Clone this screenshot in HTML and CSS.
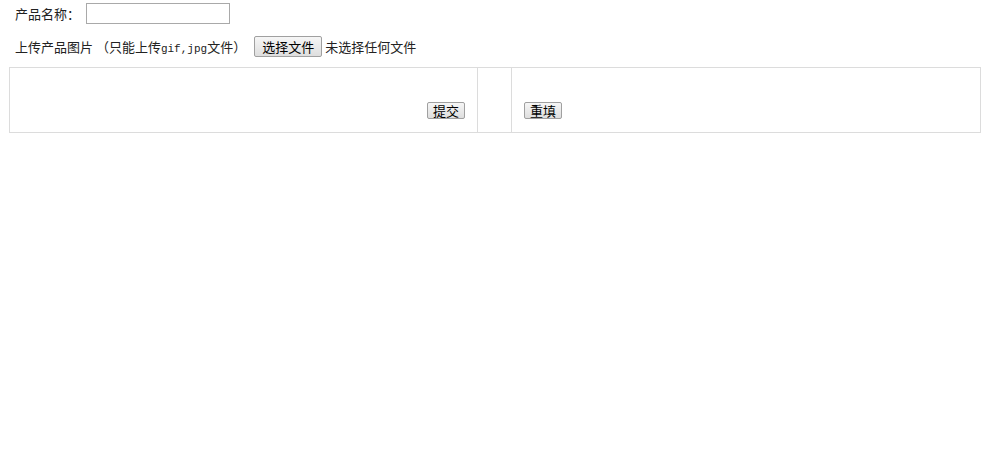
FILE: index.html
```html
<!DOCTYPE html>
<html lang="zh-CN">
  <head>
    <meta charset="UTF-8" />
    <title>产品上传</title>
    <link rel="stylesheet" href="styles.css">
  </head>
  <body>
    <form class="upload">
      <div class="row row-name">
        <label>产品名称：</label>
        <input class="text-input" type="text" />
      </div>
      <div class="row row-file">
        <span>上传产品图片 （只能上传<span class="ext">gif,jpg</span>文件）</span><button type="button" class="btn btn-file">选择文件</button><span class="file-state">未选择任何文件</span>
      </div>
      <table class="actions">
        <tr>
          <td class="cell-left"><button type="submit" class="btn btn-small">提交</button></td>
          <td class="cell-mid"></td>
          <td class="cell-right"><button type="reset" class="btn btn-small">重填</button></td>
        </tr>
      </table>
    </form>
  </body>
</html>
```

FILE: styles.css
```css
body {
  margin: 0;
  font-family: "Noto Sans CJK SC", "Liberation Sans", sans-serif;
  font-size: 13px;
  color: #222;
  background: #fff;
}
.upload {
  padding-left: 9px;
}
.row {
  display: flex;
  align-items: center;
  padding-left: 6px;
  height: 21px;
  white-space: nowrap;
}
.row-name {
  margin-top: 3px;
}
.row-file {
  margin-top: 12px;
}
.ext {
  font-family: "Liberation Mono", monospace;
  font-size: 11px;
}
.text-input {
  box-sizing: border-box;
  width: 144px;
  height: 21px;
  margin: 0 0 0 6px;
  border: 1px solid #a9a9a9;
  padding: 1px 3px;
  font-size: 13px;
}
.btn {
  box-sizing: border-box;
  font-family: "Noto Sans CJK SC", sans-serif;
  font-size: 13px;
  color: #000;
  border: 1px solid #a0a0a0;
  border-radius: 2px;
  background: linear-gradient(#f6f6f6, #dedede);
  padding: 0;
  margin: 0;
  line-height: 1;
  cursor: pointer;
}
.btn-file {
  width: 68px;
  height: 21px;
  margin-left: 8px;
}
.file-state {
  margin-left: 3px;
}
.btn-small {
  width: 38px;
  height: 17px;
}
.actions {
  margin-top: 10px;
  width: 972px;
  border-collapse: collapse;
}
.actions td {
  border: 1px solid #dcdcdc;
  height: 65px;
  padding: 0 12px 12px;
  vertical-align: bottom;
  box-sizing: border-box;
}
.cell-left {
  width: 468px;
  text-align: right;
}
.cell-mid {
  width: 34px;
}
.cell-right {
  text-align: left;
}
```
